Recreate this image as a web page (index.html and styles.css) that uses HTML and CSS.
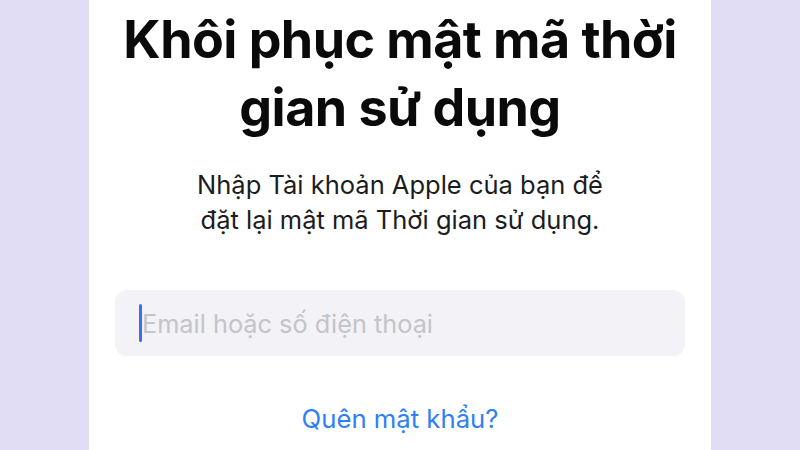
FILE: index.html
```html
<!DOCTYPE html>
<html lang="vi">
<head>
<meta charset="utf-8">
<title>Khôi phục mật mã thời gian sử dụng</title>
<link rel="stylesheet" href="styles.css">
</head>
<body>
<main class="panel">
  <h1 class="title">Khôi phục mật mã thời<br>gian sử dụng</h1>
  <p class="subtitle">Nhập Tài khoản Apple của bạn để<br>đặt lại mật mã Thời gian sử dụng.</p>
  <div class="field">
    <span class="caret"></span>
    <span class="placeholder">Email hoặc số điện thoại</span>
  </div>
  <a class="link" href="#">Quên mật khẩu?</a>
</main>
</body>
</html>
```
FILE: styles.css
```css
html, body {
  margin: 0;
  padding: 0;
  height: 100%;
}
body {
  background: #e0ddf5;
  font-family: Inter, "Noto Sans", "DejaVu Sans", sans-serif;
  overflow: hidden;
}
.panel {
  width: 622px;
  height: 450px;
  margin: 0 auto;
  background: #ffffff;
  display: flex;
  flex-direction: column;
  align-items: center;
}
.title {
  margin: 6px 0 0;
  font-size: 52px;
  line-height: 68px;
  font-weight: 700;
  color: #0a0a0a;
  text-align: center;
  letter-spacing: -0.55px;
}
.subtitle {
  margin: 25px 0 0;
  font-size: 25.5px;
  line-height: 35px;
  color: #1c1c1e;
  text-align: center;
}
.field {
  margin-top: 53px;
  width: 570px;
  height: 66px;
  box-sizing: border-box;
  background: #f2f2f7;
  border-radius: 12px;
  display: flex;
  align-items: center;
  padding-left: 24px;
}
.caret {
  width: 3px;
  height: 38px;
  border-radius: 2px;
  background: #3b6ef5;
}
.placeholder {
  font-size: 25.3px;
  color: #c4c4c9;
}
.link {
  margin-top: 47px;
  font-size: 25.7px;
  color: #2f80f6;
  text-decoration: none;
}
```
